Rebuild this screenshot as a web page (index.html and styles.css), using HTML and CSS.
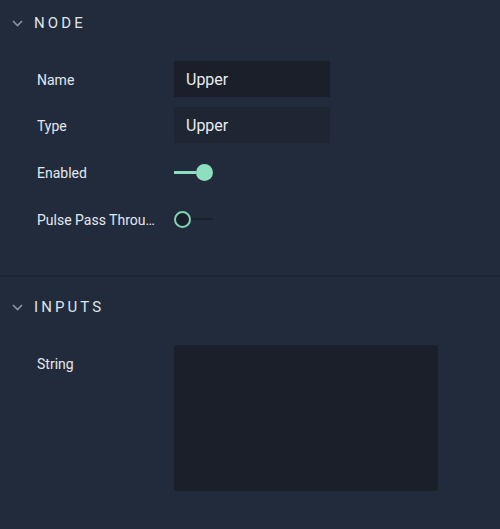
FILE: index.html
```html
<!DOCTYPE html>
<html>
<head>
<meta charset="utf-8">
<link rel="stylesheet" href="styles.css">
</head>
<body>
<div class="panel">
  <section class="section">
    <div class="header">
      <svg class="chev" width="11" height="7" viewBox="0 0 11 7"><path d="M1 1 L5.5 5.5 L10 1" fill="none" stroke="#8b94a3" stroke-width="1.6"/></svg>
      <span class="title">NODE</span>
    </div>
    <div class="rows">
      <div class="row">
        <div class="label">Name</div>
        <div class="input">Upper</div>
      </div>
      <div class="row">
        <div class="label">Type</div>
        <div class="input readonly">Upper</div>
      </div>
      <div class="row tall">
        <div class="label">Enabled</div>
        <div class="toggle on"><span class="track"></span><span class="knob"></span></div>
      </div>
      <div class="row tall">
        <div class="label" title="Pulse Pass Through">Pulse Pass Through</div>
        <div class="toggle off"><span class="knob"></span><span class="track"></span></div>
      </div>
    </div>
  </section>
  <section class="section second">
    <div class="header">
      <svg class="chev" width="11" height="7" viewBox="0 0 11 7"><path d="M1 1 L5.5 5.5 L10 1" fill="none" stroke="#8b94a3" stroke-width="1.6"/></svg>
      <span class="title">INPUTS</span>
    </div>
    <div class="rows">
      <div class="row top">
        <div class="label">String</div>
        <div class="textarea"></div>
      </div>
    </div>
  </section>
</div>
</body>
</html>
```

FILE: styles.css
```css
html, body {
  margin: 0;
  padding: 0;
  background: #222b3b;
  font-family: Roboto, "Noto Sans", sans-serif;
  color: #dfe5ec;
}
.panel {
  width: 500px;
  height: 529px;
  overflow: hidden;
}
.section {
  padding-top: 7px;
  padding-bottom: 37px;
}
.section.second {
  padding-top: 14px;
  border-top: 2px solid #1c2431;
}
.header {
  height: 32px;
  display: flex;
  align-items: center;
  padding-left: 12px;
}
.chev {
  display: block;
  margin-right: 11px;
}
.title {
  font-size: 15px;
  letter-spacing: 3.1px;
  color: #dde4ec;
}
.rows {
  margin-top: 22px;
  display: flex;
  flex-direction: column;
  gap: 10px;
  padding-left: 37px;
}
.row {
  display: flex;
  align-items: center;
  height: 36px;
}
.row.tall {
  height: 38px;
}
.row.tall + .row.tall {
  margin-top: -1px;
}
.row.top {
  align-items: flex-start;
  height: auto;
}
.label {
  width: 120px;
  margin-right: 17px;
  padding-top: 2px;
  font-size: 14px;
  color: #e2e8ef;
  white-space: nowrap;
  overflow: hidden;
  text-overflow: ellipsis;
}
.row.top .label {
  margin-top: 9px;
}
.input {
  width: 144px;
  height: 36px;
  padding-left: 12px;
  box-sizing: content-box;
  background: #1a1f29;
  border-radius: 1px;
  font-size: 16px;
  line-height: 38px;
  color: #e6ebf0;
}
.input.readonly {
  background: #1e2533;
}
.toggle {
  display: flex;
  align-items: center;
  width: 39px;
  height: 18px;
}
.toggle .knob {
  width: 17px;
  height: 17px;
  border-radius: 50%;
  box-sizing: border-box;
  flex: none;
}
.toggle.on .track {
  width: 22px;
  height: 3px;
  background: #8ddfbf;
}
.toggle.on .knob {
  background: #8ddfbf;
}
.toggle.off .knob {
  background: #1a2029;
  border: 2px solid #7fd2b2;
}
.toggle.off .track {
  width: 22px;
  height: 2px;
  background: #1a2029;
}
.textarea {
  width: 264px;
  height: 146px;
  background: #1a1f29;
  border-radius: 3px;
}
```
